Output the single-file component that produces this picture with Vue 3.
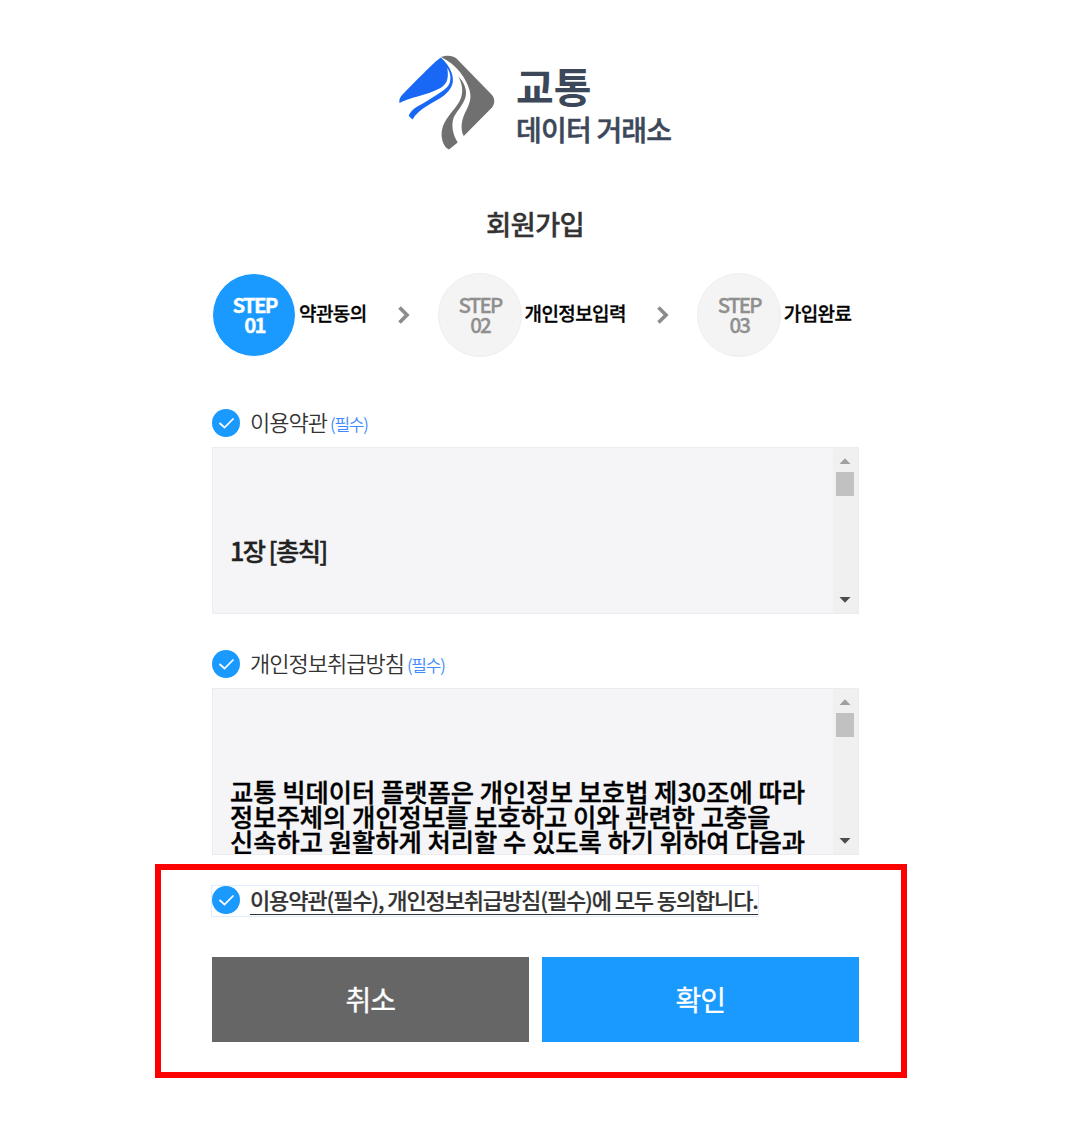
<script setup>
const steps = [
  { no: '01', label: '약관동의', active: true },
  { no: '02', label: '개인정보입력', active: false },
  { no: '03', label: '가입완료', active: false },
]
const terms = [
  { key: 'use', title: '이용약관', body: ['1장 [총칙]'] },
  {
    key: 'privacy',
    title: '개인정보취급방침',
    body: [
      '교통 빅데이터 플랫폼은 개인정보 보호법 제30조에 따라',
      '정보주체의 개인정보를 보호하고 이와 관련한 고충을',
      '신속하고 원활하게 처리할 수 있도록 하기 위하여 다음과',
    ],
  },
]
</script>

<template>
  <main class="page">
    <header class="brand">
      <svg class="mark" width="98" height="96" viewBox="0 0 98 96">
        <path fill="#1967f5" d="M42.800 2.500C37 6 15 29 4.500 39.500C1.500 42.500 1 45 1.500 48C10 43 30 40 42 33.300C49 29 51 24 49.300 13C52.500 18 53 23 51.800 27.500C50 34 40 39 25.300 48.300C18 52 12 56 10.800 61L14.500 64.500C21 53 36 48 46 40.500C54 34 57 27 53.500 17.500C51.500 12 48 7 42.800 2.500Z" />
        <path fill="#707070" d="M43 2C48 .3 54 -.3 58.500 3.500L94 40C97 43.500 97 48.500 94 52.500L65.800 81C62.500 75 63 67 66.500 59C71 50 74 44 71.500 35C68 23 59 10 43 2Z" />
        <path fill="#707070" d="M60.300 21.500C66 27 69.500 35 67.500 42C65.500 50 58 57 55.500 63C53 71 55 80 59.700 87.500L51 94.500C45 92 42.500 82 44 75C46 64 55 57 60.500 48C65 41 66 32 60.300 21.500Z" />
      </svg>
      <div class="brand-text">
        <strong>교통</strong>
        <span>데이터 거래소</span>
      </div>
    </header>

    <h1>회원가입</h1>

    <ol class="steps">
      <template v-for="(s, i) in steps" :key="s.no">
        <li v-if="i" class="sep">
          <svg width="14" height="20" viewBox="0 0 14 20"><path d="M2.500 2.500L10 10L2.500 17.500" fill="none" stroke="#8c8c8c" stroke-width="3.700" /></svg>
        </li>
        <li class="step" :class="{ active: s.active }">
          <span class="circle">STEP<br>{{ s.no }}</span>
          <span class="step-label">{{ s.label }}</span>
        </li>
      </template>
    </ol>

    <section v-for="t in terms" :key="t.key" class="term">
      <div class="term-head">
        <svg class="check" width="28" height="28" viewBox="0 0 28 28"><circle cx="14" cy="14" r="14" fill="#1a9aff" /><path d="M7.500 14L12.500 18.500L21.500 9.500" fill="none" stroke="#fff" stroke-width="1.700" /></svg>
        <span class="term-title">{{ t.title }}</span>
        <span class="required">(필수)</span>
      </div>
      <div class="box">
        <div class="box-text" :class="t.key"><p v-for="line in t.body" :key="line">{{ line }}</p></div>
        <div class="scroll">
          <svg width="12" height="6" viewBox="0 0 12 6"><path d="M.5 6L6 .3L11.500 6Z" fill="#a0a0a0" /></svg>
          <i class="thumb"></i>
          <svg class="down" width="12" height="6" viewBox="0 0 12 6"><path d="M.5 0L6 5.700L11.500 0Z" fill="#4c4c4c" /></svg>
        </div>
      </div>
    </section>

    <section class="confirm">
      <label class="agree">
        <svg class="check" width="28" height="28" viewBox="0 0 28 28"><circle cx="14" cy="14" r="14" fill="#1a9aff" /><path d="M7.500 14L12.500 18.500L21.500 9.500" fill="none" stroke="#fff" stroke-width="1.700" /></svg>
        <span class="agree-text">이용약관(필수), 개인정보취급방침(필수)에 모두 동의합니다.</span>
      </label>
      <div class="buttons">
        <button type="button" class="cancel">취소</button>
        <button type="button" class="ok">확인</button>
      </div>
    </section>
  </main>
</template>

<style>
body { background: #fff; }
</style>

<style scoped>
* { box-sizing: border-box; }
.page {
  width: 1082px;
  height: 1125px;
  overflow: hidden;
  background: #fff;
  font-family: "Noto Sans CJK KR", sans-serif;
  color: #333;
}
.page, .page * { white-space: nowrap; }
.brand { display: flex; padding: 55px 0 0 398px; height: 155px; }
.mark { flex: none; }
.brand-text { display: flex; flex-direction: column; margin-left: 20px; color: #3c4859; }
.brand-text strong { font-size: 41px; line-height: 44px; font-weight: 700; margin-top: 8px; }
.brand-text span { font-size: 28px; line-height: 36px; font-weight: 500; margin-top: 4px; letter-spacing: -0.8px; -webkit-text-stroke: 0.5px; }
h1 {
  margin: 50px 0 0 486px;
  height: 36px;
  font-size: 27.5px;
  line-height: 36px;
  font-weight: 500;
  letter-spacing: -0.8px;
  -webkit-text-stroke: 0.3px;
}
.steps { list-style: none; margin: 31px 0 0 212px; padding: 0; height: 86px; display: flex; align-items: center; width: 660px; }
.step { display: flex; align-items: center; }
.circle {
  width: 84px;
  height: 84px;
  border-radius: 50%;
  background: #f4f4f4;
  border: 1px solid #eee;
  color: #8f8f8f;
  padding-top: 20px;
  padding-left: 1px;
  text-align: center;
  font-size: 20.5px;
  line-height: 20px;
  font-weight: 500;
  letter-spacing: -1.8px;
  -webkit-text-stroke: 0.3px;
}
.active .circle { background: #1a9aff; color: #fff; border: 1px solid #fff; font-weight: 700; }
.step-label { margin: -4px 0 0 3px; font-size: 19px; line-height: 24px; font-weight: 500; letter-spacing: -0.6px; color: #000; -webkit-text-stroke: 0.3px; }
.sep { width: 71px; height: 20px; padding-left: 30px; display: flex; }
.term { width: 647px; margin-left: 212px; padding-top: 49px; }
.term + .term { padding-top: 34px; }
.term-head { display: flex; align-items: center; height: 32px; }
.check { flex: none; display: block; }
.term-title { margin: -4px 0 0 10px; font-size: 22px; line-height: 32px; font-weight: 350; letter-spacing: -1px; }
.required { margin: 2px 0 0 3px; font-size: 17px; line-height: 32px; font-weight: 350; letter-spacing: -1.2px; color: #3d8bff; }
.box { height: 167px; margin-top: 8px; background: #f5f5f8; border: 1px solid #ececee; display: flex; justify-content: space-between; overflow: hidden; }
.box-text { padding: 90px 0 0 17px; font-size: 25.3px; line-height: 25px; font-weight: 500; color: #000; -webkit-text-stroke: 0.4px; }
.box-text.use { letter-spacing: -1.6px; color: #222; }
.box-text p { margin: 0; }
.scroll { width: 25px; background: #f0f0f0; display: flex; flex-direction: column; align-items: center; padding: 10px 2px 10px 0; }
.thumb { width: 18px; height: 24px; background: #c1c1c1; margin-top: 8px; }
.down { margin-top: auto; }
.confirm { width: 752px; height: 214px; margin: 9px 0 0 155px; border: 6px solid #f00; padding: 15px 0 0 50px; }
.agree { display: flex; align-items: flex-start; width: 548px; height: 32px; border: 1px solid #e1ecff; padding-right: 1px; }
.agree-text { margin-left: 10px; height: 29px; border-bottom: 1px solid #333; font-size: 22px; line-height: 26px; font-weight: 500; letter-spacing: -1.13px; -webkit-text-stroke: 0.2px; }
.buttons { display: flex; gap: 13.5px; margin: 40px 0 0 1px; }
.buttons button { width: 316.5px; height: 85px; border: 0; padding: 0 0 2px; font-family: inherit; font-size: 28px; line-height: 40px; font-weight: 400; letter-spacing: -1px; color: #fff; -webkit-text-stroke: 0.3px; }
.cancel { background: #666; }
.ok { background: #1a9aff; }
</style>
